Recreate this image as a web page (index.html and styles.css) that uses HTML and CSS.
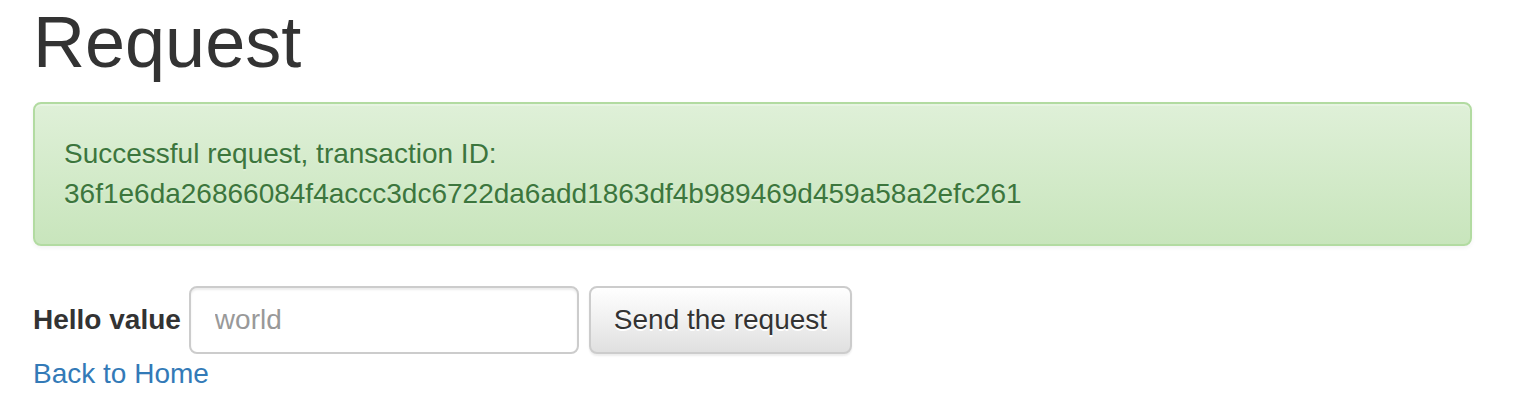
FILE: index.html
```html
<!DOCTYPE html>
<html>
<head>
<meta charset="utf-8">
<title>Request</title>
<link rel="stylesheet" href="styles.css">
</head>
<body>
<div class="page">
  <h1 class="title">Request</h1>
  <div class="alert">Successful request, transaction ID:<br>36f1e6da26866084f4accc3dc6722da6add1863df4b989469d459a58a2efc261</div>
  <form class="form-inline">
    <label class="label" for="hello">Hello value</label>
    <input class="input" id="hello" type="text" placeholder="world">
    <button class="btn" type="button">Send the request</button>
  </form>
  <a class="link" href="#">Back to Home</a>
</div>
</body>
</html>
```
FILE: styles.css
```css
html, body {
  margin: 0;
  padding: 0;
  background: #fff;
}
body {
  font-family: "Liberation Sans", Arial, sans-serif;
  font-size: 28px;
  line-height: 40px;
  color: #333;
}
.page {
  margin: 0 66px 0 33px;
  padding-top: 3px;
}
.title {
  font-size: 72px;
  font-weight: 500;
  line-height: 1.1;
  margin: 0 0 20px 0;
  color: #333;
}
.alert {
  padding: 30px 30px 30px 29px;
  border: 2px solid #b2dba1;
  border-radius: 8px;
  margin-bottom: 40px;
  color: #3c763d;
  background-image: linear-gradient(to bottom, #dff0d8 0, #c8e5bc 100%);
  box-shadow: inset 0 2px 0 rgba(255,255,255,.25), 0 2px 4px rgba(0,0,0,.05);
  text-shadow: 0 2px 0 rgba(255,255,255,.2);
}
.form-inline {
  display: flex;
  align-items: center;
  margin: 0;
}
.label {
  font-weight: bold;
  margin-right: 8px;
}
.input {
  box-sizing: border-box;
  width: 390px;
  height: 68px;
  padding: 12px 24px;
  font-family: inherit;
  font-size: 28px;
  line-height: 40px;
  color: #555;
  background: #fff;
  border: 2px solid #ccc;
  border-radius: 8px;
  box-shadow: inset 0 2px 2px rgba(0,0,0,.075);
  outline: none;
  margin-right: 10px;
}
.input::placeholder {
  color: #999;
}
.btn {
  box-sizing: border-box;
  height: 68px;
  padding: 12px 23px;
  font-family: inherit;
  font-size: 28px;
  line-height: 40px;
  color: #333;
  border: 2px solid #ccc;
  border-radius: 8px;
  background-image: linear-gradient(to bottom, #fff 0, #e0e0e0 100%);
  box-shadow: inset 0 2px 0 rgba(255,255,255,.15), 0 2px 2px rgba(0,0,0,.075);
  text-shadow: 0 2px 0 #fff;
  cursor: pointer;
}
.link {
  display: inline-block;
  color: #337ab7;
  text-decoration: none;
}
```
